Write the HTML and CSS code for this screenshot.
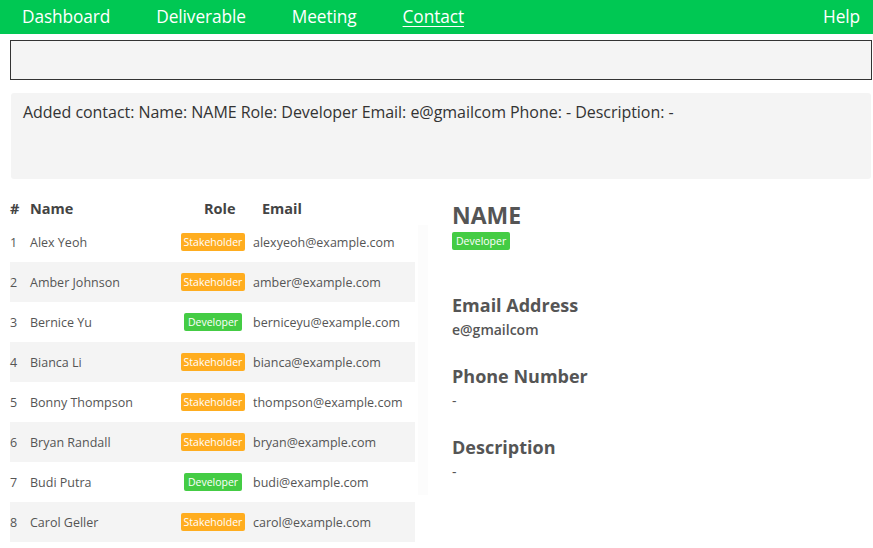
FILE: index.html
```html
<!DOCTYPE html>
<html>
<head>
<meta charset="utf-8">
<link rel="stylesheet" href="styles.css">
</head>
<body>
<nav class="nav">
  <div class="nav-links">
    <a class="nav-link">Dashboard</a>
    <a class="nav-link">Deliverable</a>
    <a class="nav-link">Meeting</a>
    <a class="nav-link active">Contact</a>
  </div>
  <a class="nav-link">Help</a>
</nav>
<div class="command"></div>
<div class="result">Added contact: Name: NAME Role: Developer Email: e@gmailcom Phone: - Description: -</div>
<main class="main">
  <section class="list">
    <div class="row head">
      <span class="c-num">#</span><span class="c-name">Name</span><span class="c-role">Role</span><span class="c-email">Email</span>
    </div>
    <div class="row"><span class="c-num">1</span><span class="c-name">Alex Yeoh</span><span class="c-role"><span class="badge stake">Stakeholder</span></span><span class="c-email">alexyeoh@example.com</span></div>
    <div class="row alt"><span class="c-num">2</span><span class="c-name">Amber Johnson</span><span class="c-role"><span class="badge stake">Stakeholder</span></span><span class="c-email">amber@example.com</span></div>
    <div class="row"><span class="c-num">3</span><span class="c-name">Bernice Yu</span><span class="c-role"><span class="badge dev">Developer</span></span><span class="c-email">berniceyu@example.com</span></div>
    <div class="row alt"><span class="c-num">4</span><span class="c-name">Bianca Li</span><span class="c-role"><span class="badge stake">Stakeholder</span></span><span class="c-email">bianca@example.com</span></div>
    <div class="row"><span class="c-num">5</span><span class="c-name">Bonny Thompson</span><span class="c-role"><span class="badge stake">Stakeholder</span></span><span class="c-email">thompson@example.com</span></div>
    <div class="row alt"><span class="c-num">6</span><span class="c-name">Bryan Randall</span><span class="c-role"><span class="badge stake">Stakeholder</span></span><span class="c-email">bryan@example.com</span></div>
    <div class="row"><span class="c-num">7</span><span class="c-name">Budi Putra</span><span class="c-role"><span class="badge dev">Developer</span></span><span class="c-email">budi@example.com</span></div>
    <div class="row alt"><span class="c-num">8</span><span class="c-name">Carol Geller</span><span class="c-role"><span class="badge stake">Stakeholder</span></span><span class="c-email">carol@example.com</span></div>
  </section>
  <div class="track"></div>
  <section class="detail">
    <h1 class="d-name">NAME</h1>
    <span class="badge dev">Developer</span>
    <h2 class="d-label first">Email Address</h2>
    <div class="d-value">e@gmailcom</div>
    <h2 class="d-label">Phone Number</h2>
    <div class="d-value dash">-</div>
    <h2 class="d-label">Description</h2>
    <div class="d-value dash">-</div>
  </section>
</main>
</body>
</html>
```
FILE: styles.css
```css
* { box-sizing: border-box; }
html, body { margin: 0; padding: 0; background: #fff; }
body {
  font-family: "Open Sans", "Noto Sans", sans-serif;
  color: #555;
  width: 873px;
  height: 548px;
  overflow: hidden;
}
.nav {
  height: 34px;
  background: #00c853;
  display: flex;
  align-items: center;
  justify-content: space-between;
  padding: 0 13px 0 22px;
}
.nav-links { display: flex; }
.nav-link {
  color: #fff;
  font-size: 17.3px;
  letter-spacing: -0.1px;
  line-height: 34px;
}
.nav-links .nav-link { margin-right: 46px; }
.nav-link.active { text-decoration: underline; text-underline-offset: 3px; text-decoration-thickness: 1px; }
.command {
  margin: 6px 1px 0 10px;
  height: 40px;
  border: 1px solid #333;
  background: #f4f4f4;
}
.result {
  margin: 13px 2px 0 11px;
  height: 86px;
  background: #f4f4f4;
  border-radius: 3px;
  padding: 8px 12px;
  font-size: 16px;
  color: #333;
  letter-spacing: -0.04px;
}
.main {
  display: flex;
  margin-top: 17px;
  padding-left: 10px;
}
.list { width: 405px; }
.row {
  display: flex;
  align-items: center;
  height: 40px;
  font-size: 12.5px;
  color: #555;
}
.row.alt { background: #f4f4f4; }
.row.head {
  height: 25px;
  margin-bottom: 1px;
  font-weight: 700;
  font-size: 14.5px;
  color: #444;
}
.c-num { width: 20px; }
.c-name { width: 150px; }
.c-role { width: 66px; display: flex; justify-content: center; }
.c-email { flex: 1; margin-left: 7px; }
.row.head .c-role { justify-content: flex-start; padding-left: 24px; }
.row.head .c-email { margin-left: 16px; }
.badge {
  display: inline-block;
  color: #fff;
  font-size: 10.5px;
  line-height: 18px;
  height: 18px;
  padding: 0 3px;
  border-radius: 2px;
}
.badge.stake { background: #ffad1f; }
.badge.dev { background: #44cc44; padding: 0 4px; }
.track {
  width: 10px;
  margin: 29px 0 0 3px;
  height: 270px;
  background: #fcfcfc;
}
.detail {
  display: flex;
  flex-direction: column;
  align-items: flex-start;
  padding-left: 24px;
  padding-top: 5px;
}
.d-name {
  margin: 0;
  font-size: 23px;
  font-weight: 700;
  line-height: 28px;
  color: #555;
}
.detail > .badge { margin-top: 3px; }
.d-label {
  margin: 21px 0 0;
  font-size: 18px;
  font-weight: 700;
  line-height: 26px;
  color: #555;
}
.d-label.first { margin-top: 42px; }
.d-value {
  font-size: 14px;
  font-weight: 600;
  line-height: 24px;
  color: #555;
}
.d-value.dash { font-weight: 400; }
```
